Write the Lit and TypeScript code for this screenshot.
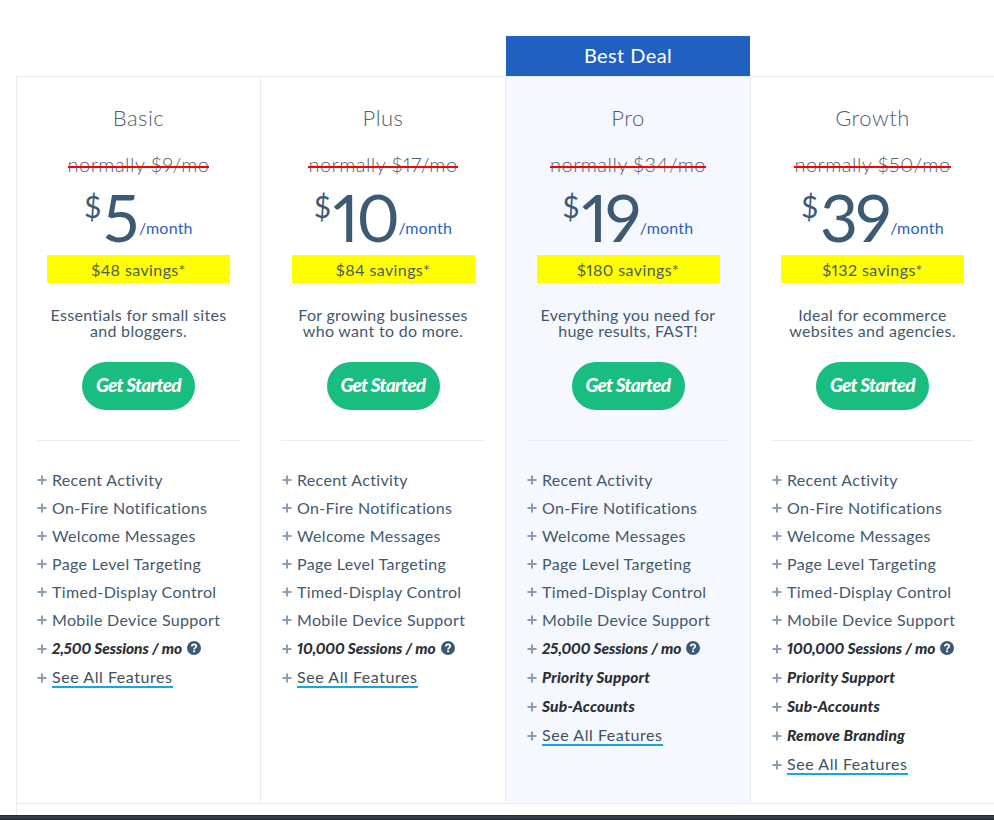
import { LitElement, html, css, nothing } from "lit";
import { customElement } from "lit/decorators.js";

type Plan = {
  name: string; was: string; price: string; save: string; desc: [string, string];
  sessions: string; extras: string[]; best?: boolean;
};

const BASE = ["Recent Activity", "On-Fire Notifications", "Welcome Messages", "Page Level Targeting", "Timed-Display Control", "Mobile Device Support"];

const PLANS: Plan[] = [
  { name: "Basic", was: "normally $9/mo", price: "5", save: "$48 savings*", desc: ["Essentials for small sites", "and bloggers."], sessions: "2,500 Sessions / mo", extras: [] },
  { name: "Plus", was: "normally $17/mo", price: "10", save: "$84 savings*", desc: ["For growing businesses", "who want to do more."], sessions: "10,000 Sessions / mo", extras: [] },
  { name: "Pro", was: "normally $34/mo", price: "19", save: "$180 savings*", desc: ["Everything you need for", "huge results, FAST!"], sessions: "25,000 Sessions / mo", extras: ["Priority Support", "Sub-Accounts"], best: true },
  { name: "Growth", was: "normally $50/mo", price: "39", save: "$132 savings*", desc: ["Ideal for ecommerce", "websites and agencies."], sessions: "100,000 Sessions / mo", extras: ["Priority Support", "Sub-Accounts", "Remove Branding"] },
];

@customElement("app-root")
export class AppRoot extends LitElement {
  static styles = css`
    :host { display: block; width: 994px; height: 820px; overflow: hidden; background: #fff;
      font-family: "Lato", "Open Sans", sans-serif; color: #43596f; font-variant-numeric: proportional-nums; }
    .page { display: flex; flex-direction: column; height: 820px; padding-top: 76px; box-sizing: border-box; }
    .table { display: grid; grid-template-columns: 244px 245px 245px 1fr; margin-left: 16px; height: 728px; box-sizing: border-box;
      border-top: 1px solid #e6ecf6; border-bottom: 1px solid #e6ecf6; }
    .col { position: relative; display: flex; flex-direction: column; align-items: center; border-left: 1px solid #e6ecf6; min-width: 0; }
    .col.best { background: #f5f8fe; }
    .badge { position: absolute; left: 0; right: 0; top: -41px; height: 40px; padding-bottom: 2px; box-sizing: border-box; background: #2060c0; color: #fff;
      display: flex; align-items: center; justify-content: center; font-size: 20px; letter-spacing: 0.4px; }
    .name { margin-top: 27px; height: 28px; line-height: 28px; font-size: 22px; font-weight: 300; letter-spacing: 0.5px; color: #4d6073; }
    .was { margin-top: 20px; height: 24px; line-height: 24px; font-size: 20px; font-weight: 300; letter-spacing: 0.5px; color: #4d6073; position: relative; }
    .was::after { content: ""; position: absolute; left: 0; right: 0; top: 14px; height: 2px; background: #f00; }
    .price { display: flex; align-items: flex-start; height: 68px; margin-top: 7px; color: #3d5a75; }
    .cur { font-size: 30px; line-height: 36px; margin-top: 5px; margin-right: 2px; font-weight: 400; }
    .num { font-size: 66px; line-height: 68px; font-weight: 400; letter-spacing: -1px; }
    .num.wide { letter-spacing: -2.5px; }
    .per { font-size: 16px; line-height: 20px; margin-top: 35px; margin-left: 1px; color: #2a62c0; letter-spacing: 0.2px; }
    .save { margin-top: 4px; width: 183px; height: 28px; line-height: 30px; background: #ff0; text-align: center; font-size: 16px; letter-spacing: 0.4px; color: #4d5d5f; }
    .desc { margin-top: 24px; height: 32px; text-align: center; font-size: 16px; line-height: 16px; letter-spacing: 0.3px; }
    .btn { margin-top: 23px; width: 113px; height: 48px; padding-bottom: 3px; box-sizing: border-box; border-radius: 24px; background: #19bd80; color: #fff; display: flex;
      align-items: center; justify-content: center; font-size: 19px; font-weight: 900; font-style: italic; letter-spacing: -0.7px; }
    .rule { align-self: stretch; margin: 30px 20px 0; height: 1px; background: #e9eef5; }
    ul { list-style: none; margin: 24px 0 0; padding: 0 20px; align-self: stretch; }
    .col + .col ul { padding-left: 21px; }
    li { display: flex; align-items: center; height: 28px; font-size: 16px; letter-spacing: 0.33px; }
    li svg.plus { width: 10px; height: 10px; margin: 2px 5px 0 0; flex: none; }
    li.strong { height: 29px; font-weight: 900; font-style: italic; color: #2b2f36; font-size: 15.5px; letter-spacing: 0.2px; }
    li.sess { letter-spacing: -0.08px; }
    .help { width: 14px; height: 14px; margin-left: 5px; }
    li.see { height: 30px; }
    .all { color: #43505f; border-bottom: 2px solid #12a9e0; line-height: 19px; letter-spacing: 0.55px; }
    .rest { flex: 1; margin-left: 16px; border-left: 1px solid #e6ecf6; }
    .dark { height: 5px; background: linear-gradient(#1c242c, #3a4650 40%, #20282f); }
  `;

  private plus() {
    return html`<svg class="plus" viewBox="0 0 10 10"><path d="M5 .5v9M.5 5h9" stroke="#8a9db3" stroke-width="2" fill="none"/></svg>`;
  }

  private help() {
    return html`<svg class="help" viewBox="0 0 14 14"><circle cx="7" cy="7" r="7" fill="#3d5a75"/><path d="M4.8 5.4C4.9 4.1 5.8 3.4 7 3.4c1.3 0 2.2.8 2.2 1.9 0 1.6-2.1 1.6-2.1 3.1" stroke="#fff" stroke-width="1.7" fill="none"/><rect x="6.1" y="9.4" width="2" height="1.8" fill="#fff"/></svg>`;
  }

  private column(p: Plan) {
    return html`<div class="col ${p.best ? "best" : ""}">
      ${p.best ? html`<div class="badge">Best Deal</div>` : nothing}
      <div class="name">${p.name}</div>
      <div class="was">${p.was}</div>
      <div class="price"><span class="cur">$</span><span class="num ${p.price.length > 1 ? "wide" : ""}">${p.price}</span><span class="per">/month</span></div>
      <div class="save">${p.save}</div>
      <div class="desc">${p.desc[0]}<br />${p.desc[1]}</div>
      <div class="btn">Get Started</div>
      <div class="rule"></div>
      <ul>
        ${BASE.map((t) => html`<li>${this.plus()}${t}</li>`)}
        <li class="strong sess">${this.plus()}${p.sessions}${this.help()}</li>
        ${p.extras.map((t) => html`<li class="strong">${this.plus()}${t}</li>`)}
        <li class="see">${this.plus()}<span class="all">See All Features</span></li>
      </ul>
    </div>`;
  }

  render() {
    return html`<div class="page">
      <div class="table">${PLANS.map((p) => this.column(p))}</div>
      <div class="rest"></div>
      <div class="dark"></div>
    </div>`;
  }
}
